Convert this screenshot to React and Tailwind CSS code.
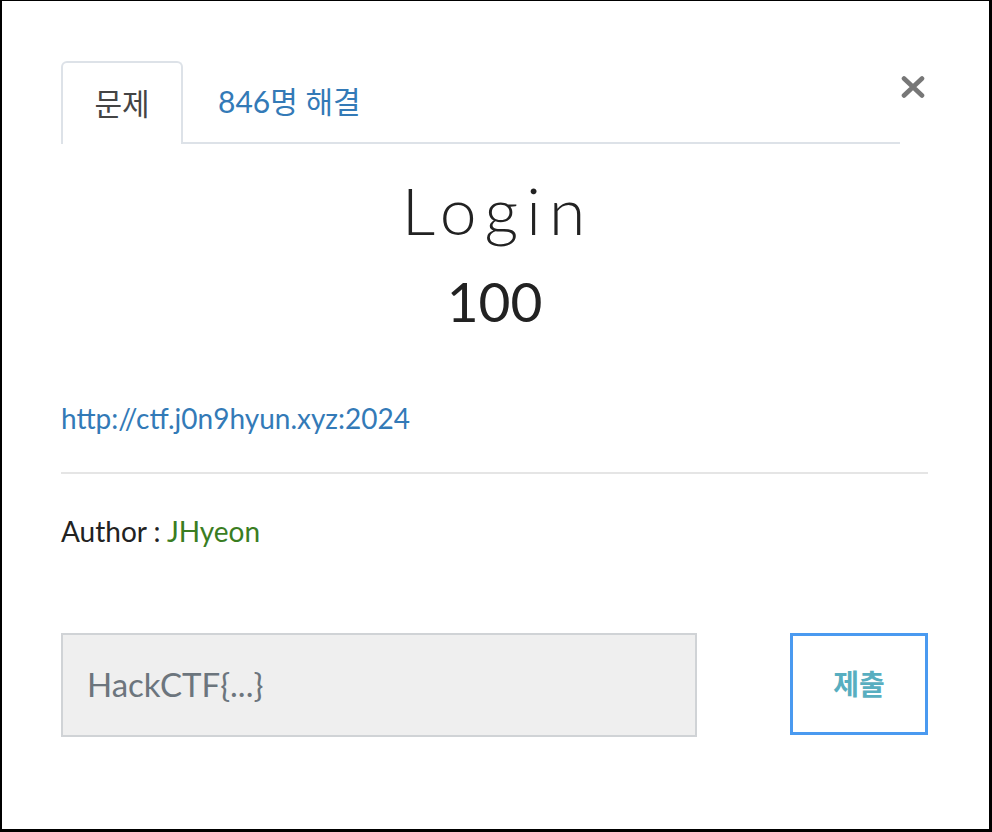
export default function App() {
  return (
    <div
      className="w-[992px] h-[832px] bg-white box-border border-t border-l-2 border-r-[3px] border-b-[3px] border-black"
      style={{ fontFamily: 'Lato, "Noto Sans CJK KR", sans-serif' }}
    >
      <div className="pl-[59px] pr-[61px] pt-[60px]">
        <div className="flex items-start">
          <ul className="flex flex-1 border-b-2 border-[#dde2e8] h-[83px]">
            <li className="w-[122px] h-[83px] -mb-[2px] border-2 border-b-0 border-[#dde2e8] rounded-t-[6px] bg-white flex items-center justify-center text-[30px] text-[#444]">
              문제
            </li>
            <li className="pl-[35px] h-[81px] flex items-center text-[30px] text-[#337ab7]">
              846명 해결
            </li>
          </ul>
          <button className="w-[28px] mt-[15px] pr-[3px] flex justify-end">
            <svg width="24" height="22" viewBox="0 0 24 22">
              <path d="M3 2.5 L21 19.5 M21 2.5 L3 19.5" stroke="#777" strokeWidth="4.6" strokeLinecap="round" fill="none" />
            </svg>
          </button>
        </div>

        <div className="text-center mt-[26px]">
          <h2 className="text-[66px] font-light text-[#222] leading-[80px] tracking-[8px] pl-[6px]">Login</h2>
          <div className="text-[55px] text-[#222] leading-[64px] mt-[19px]">100</div>
        </div>

        <div className="mt-[69px]">
          <a className="text-[28px] text-[#337ab7] leading-[32px]">http://ctf.j0n9hyun.xyz:2024</a>
        </div>
        <hr className="mt-[37px] border-t-2 border-[#e5e5e5]" />
        <div className="mt-[41px] text-[28px] text-[#222] leading-[32px]">
          Author : <span className="text-[#3a7d22]">JHyeon</span>
        </div>

        <div className="mt-[86px] flex items-start justify-between">
          <div className="w-[636px] h-[104px] bg-[#efefef] border-2 border-[#d0d3d6] flex items-center pl-[24px] text-[33px] text-[#6c757d]">
            HackCTF&#123;...&#125;
          </div>
          <button className="w-[138px] h-[102px] border-[3px] border-[#4a9af0] bg-white text-[28px] font-bold text-[#58aec0]">
            제출
          </button>
        </div>
      </div>
    </div>
  );
}
